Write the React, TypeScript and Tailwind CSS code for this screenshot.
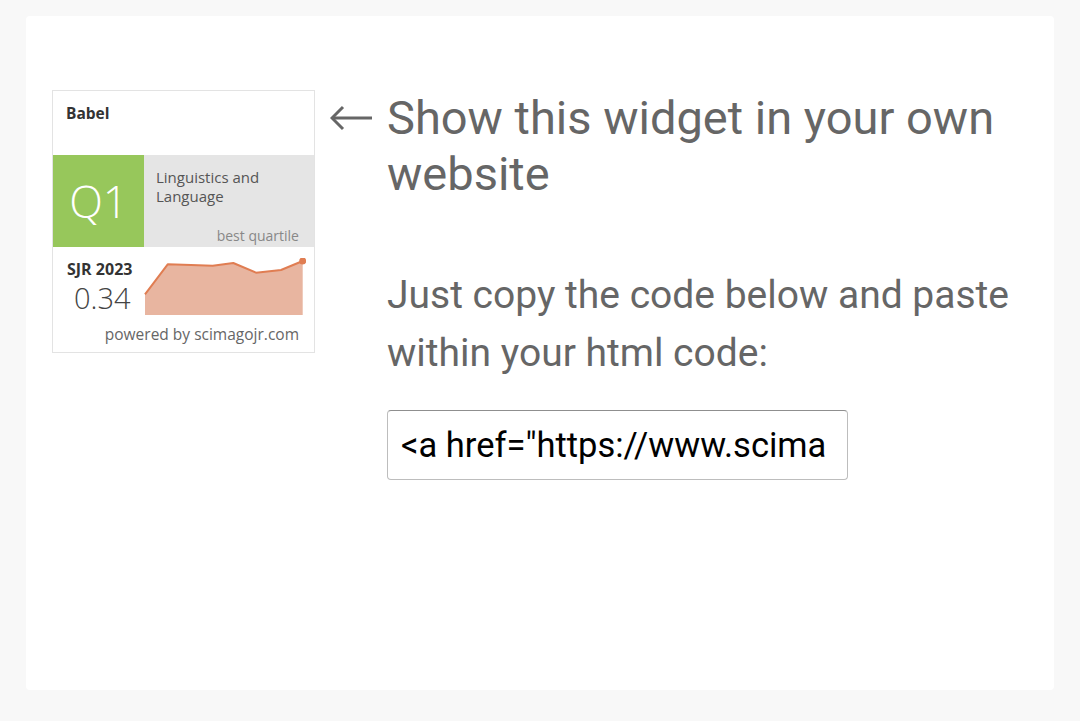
import React from "react";

const trend = [
  [0, 36.3],
  [22.7, 6.3],
  [46, 7],
  [67.7, 7.7],
  [88.3, 5],
  [111, 14.7],
  [136, 12],
  [157.7, 3],
];

function SjrWidget() {
  const line = trend.map(([x, y]) => `${x},${y}`).join(" ");
  const area = `0,57 ${line} 157.7,57`;

  return (
    <div className="flex h-[263px] w-[263px] shrink-0 flex-col border border-[#e3e3e3] bg-white font-['Open_Sans',sans-serif]">
      <div className="h-[64px] pl-[13px] pt-[12px] text-[15.5px] font-bold leading-[20px] text-[#333]">Babel</div>

      <div className="flex h-[92px]">
        <div className="flex w-[91px] items-center justify-center bg-[#97c75b] text-[44px] font-light text-white">Q1</div>
        <div className="flex flex-1 flex-col bg-[#e5e5e5] pl-[12px] pr-[15px] pt-[12px]">
          <div className="text-[15px] leading-[19px] text-[#555]">
            <div className="leading-[21px]">Linguistics and</div>
            <div className="mt-[-2px] leading-[21px]">Language</div>
          </div>
          <div className="mt-auto pb-[1px] text-right text-[14px] text-[#888]">best quartile</div>
        </div>
      </div>

      <div className="flex flex-1 flex-col">
        <div className="flex pt-[12px]">
          <div className="w-[91px] pl-[14px]">
            <div className="text-[16px] font-bold leading-[20px] text-[#333]">SJR 2023</div>
            <div className="pl-[7px] text-[29px] font-light leading-[38px] text-[#444]">0.34</div>
          </div>
          <svg width="162" height="57" viewBox="-1 0 162 57" className="mt-[-1px]">
            <polygon points={area} fill="#e8b5a0" />
            <polyline points={line} fill="none" stroke="#e07d52" strokeWidth="2" strokeLinejoin="round" />
            <circle cx="157.7" cy="3" r="3.5" fill="#e07d52" />
          </svg>
        </div>
        <div className="mt-auto pb-[6px] pr-[15px] text-right text-[15.5px] text-[#666]">powered by scimagojr.com</div>
      </div>
    </div>
  );
}

function ArrowLeft() {
  return (
    <svg width="44" height="28" viewBox="0 0 44 28" fill="none" stroke="#666" strokeWidth="3" strokeLinecap="butt">
      <path d="M42 14H3" />
      <path d="M13 3L2 14L13 25" />
    </svg>
  );
}

export default function App() {
  return (
    <div className="min-h-[721px] bg-[#f8f8f8] px-[26px] pt-[16px] pb-[31px]">
      <div className="flex h-[674px] rounded-[4px] bg-white pl-[26px] pt-[74px] font-['Roboto',sans-serif]">
        <SjrWidget />

        <div className="ml-[15px] flex flex-col">
          <div className="flex text-[47px] leading-[56px] text-[#666]">
            <span className="flex h-[56px] w-[57px] shrink-0 items-center">
              <ArrowLeft />
            </span>
            <span>
              Show this widget in your own
              <br />
              website
            </span>
          </div>

          <div className="ml-[57px] mt-[64px] text-[39px] leading-[58px] text-[#666]">
            Just copy the code below and paste
            <br />
            within your html code:
          </div>

          <input
            readOnly
            value={'<a href="https://www.scimagojr.com/journalsearch.php?q=12345&amp;tip=sid&amp;exact=no" title="SCImago Journal &amp; Country Rank">'}
            className="ml-[57px] mt-[28px] h-[70px] w-[461px] rounded-[4px] border border-[#bdbdbd] border-t-[#8f8f8f] pl-[13px] pr-[20px] text-[34.5px] text-black outline-none"
          />
        </div>
      </div>
    </div>
  );
}
